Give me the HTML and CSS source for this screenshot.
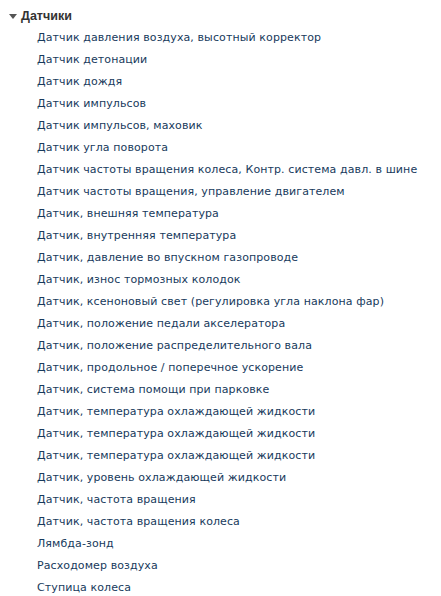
FILE: index.html
```html
<!DOCTYPE html>
<html lang="ru">
<head>
<meta charset="utf-8">
<link rel="stylesheet" href="styles.css">
</head>
<body>
<div class="tree">
  <div class="head"><span class="tri"></span><span class="title">Датчики</span></div>
  <ul class="items">
    <li>Датчик давления воздуха, высотный корректор</li>
    <li>Датчик детонации</li>
    <li>Датчик дождя</li>
    <li>Датчик импульсов</li>
    <li>Датчик импульсов, маховик</li>
    <li>Датчик угла поворота</li>
    <li>Датчик частоты вращения колеса, Контр. система давл. в шине</li>
    <li>Датчик частоты вращения, управление двигателем</li>
    <li>Датчик, внешняя температура</li>
    <li>Датчик, внутренняя температура</li>
    <li>Датчик, давление во впускном газопроводе</li>
    <li>Датчик, износ тормозных колодок</li>
    <li>Датчик, ксеноновый свет (регулировка угла наклона фар)</li>
    <li>Датчик, положение педали акселератора</li>
    <li>Датчик, положение распределительного вала</li>
    <li>Датчик, продольное / поперечное ускорение</li>
    <li>Датчик, система помощи при парковке</li>
    <li>Датчик, температура охлаждающей жидкости</li>
    <li>Датчик, температура охлаждающей жидкости</li>
    <li>Датчик, температура охлаждающей жидкости</li>
    <li>Датчик, уровень охлаждающей жидкости</li>
    <li>Датчик, частота вращения</li>
    <li>Датчик, частота вращения колеса</li>
    <li>Лямбда-зонд</li>
    <li>Расходомер воздуха</li>
    <li>Ступица колеса</li>
  </ul>
</div>
</body>
</html>
```
FILE: styles.css
```css
html, body {
  margin: 0;
  padding: 0;
  background: #ffffff;
}
.tree {
  font-family: "DejaVu Sans", Verdana, sans-serif;
  font-size: 11px;
  overflow: hidden;
  height: 596px;
  padding-top: 5px;
  box-sizing: border-box;
}
.head {
  display: flex;
  align-items: center;
  height: 22px;
  padding-left: 9px;
}
.tri {
  width: 0;
  height: 0;
  border-left: 4.5px solid transparent;
  border-right: 4.5px solid transparent;
  border-top: 5px solid #555555;
  margin-right: 4px;
  margin-top: 1px;
}
.title {
  font-family: "Liberation Sans", Arial, sans-serif;
  font-weight: bold;
  font-size: 12.5px;
  color: #333333;
}
.items {
  list-style: none;
  margin: 0;
  padding: 0 0 0 37px;
}
.items li {
  height: 22px;
  line-height: 22px;
  color: #173a5c;
  letter-spacing: 0.1px;
  white-space: nowrap;
}
```
